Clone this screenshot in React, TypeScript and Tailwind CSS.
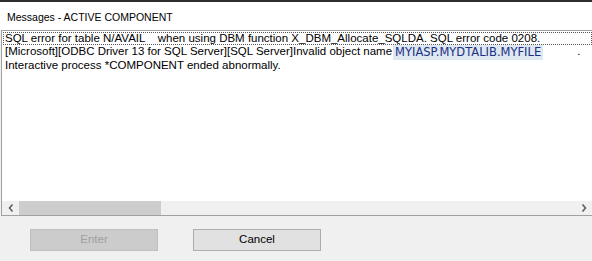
export default function App() {
  return (
    <div className="w-[592px] h-[261px] flex flex-col bg-[#f0f0f0] overflow-hidden" style={{ fontFamily: '"Liberation Sans", Arial, sans-serif' }}>
      <div className="h-[2px] bg-[#2d2d2d]" />
      {/* title */}
      <div className="h-[28px] bg-white pl-[7px] pt-[8px] text-[10.5px] leading-[14px] text-black">
        Messages - ACTIVE COMPONENT
      </div>
      {/* message list */}
      <div className="ml-[1px] h-[186px] border border-[#a0a0a0] border-r-0 bg-white flex flex-col">
        <div className="flex-1 pt-[1px] text-[11.5px] leading-[13px] text-black whitespace-pre">
          <div className="ml-[1px] mr-0 h-[13px] border border-dotted border-[#555] pl-[1px] leading-[11px]">
            SQL error for table N/AVAIL    when using DBM function X_DBM_Allocate_SQLDA. SQL error code 0208.
          </div>
          <div className="h-[14px] pl-[3px] flex items-start">
            <span>[Microsoft][ODBC Driver 13 for SQL Server][SQL Server]Invalid object name</span>
            <span className="ml-[1px] bg-[#dde8f1] text-[#1c2f86] text-[11.5px] leading-[15px] px-[2px]" style={{ fontFamily: '"DejaVu Sans", Verdana, sans-serif' }}>
              MYIASP.MYDTALIB.MYFILE
            </span>
            <span className="ml-[34px]">.</span>
          </div>
          <div className="pl-[3px] h-[13px]">Interactive process *COMPONENT ended abnormally.</div>
        </div>
        {/* horizontal scrollbar */}
        <div className="h-[14px] bg-[#f0f0f0] flex items-center">
          <div className="w-[17px] h-full flex items-center justify-center">
            <svg width="6" height="8" viewBox="0 0 6 8">
              <path d="M4.5 0.5 L1.5 4 L4.5 7.5" fill="none" stroke="#606060" strokeWidth="1.6" />
            </svg>
          </div>
          <div className="w-[142px] h-full bg-[#cdcdcd]" />
          <div className="flex-1" />
          <div className="w-[17px] h-full flex items-center justify-center">
            <svg width="6" height="8" viewBox="0 0 6 8">
              <path d="M1.5 0.5 L4.5 4 L1.5 7.5" fill="none" stroke="#606060" strokeWidth="1.6" />
            </svg>
          </div>
        </div>
      </div>
      {/* buttons */}
      <div className="flex pl-[30px] pt-[13px] gap-[35px] text-[11.5px]">
        <div className="w-[128px] h-[22px] bg-[#cccccc] border border-[#bfbfbf] flex items-center justify-center text-[#a0a0a0]">
          Enter
        </div>
        <div className="w-[128px] h-[22px] bg-[#e1e1e1] border border-[#adadad] flex items-center justify-center text-black">
          Cancel
        </div>
      </div>
    </div>
  );
}
